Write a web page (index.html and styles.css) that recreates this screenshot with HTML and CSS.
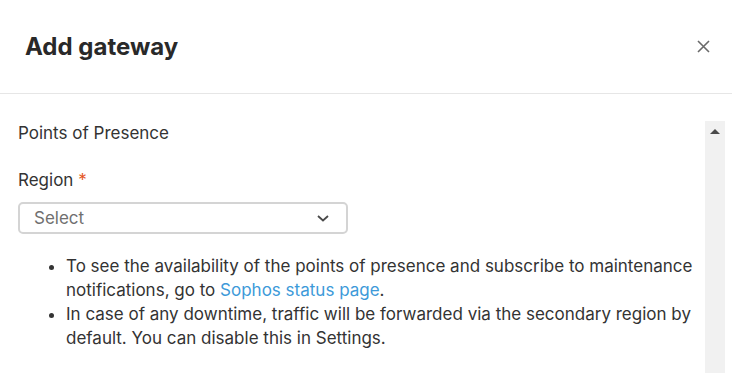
FILE: index.html
```html
<!DOCTYPE html>
<html lang="en">
<head>
    <meta charset="UTF-8">
    <meta name="viewport" content="width=device-width, initial-scale=1.0">
    <title>Add gateway</title>
    <link rel="stylesheet" href="styles.css">
</head>
<body>
    <!-- Dialog header -->
    <header class="dialog-header">
        <h1 class="dialog-title">Add gateway</h1>
        <button class="close-btn" aria-label="Close">
            <svg width="13" height="13" viewBox="0 0 13 13">
                <path d="M1 1L12 12M12 1L1 12" stroke="#6a6a6a" stroke-width="1.6" fill="none"/>
            </svg>
        </button>
    </header>

    <!-- Dialog body -->
    <div class="dialog-body">
        <div class="scroll-content">
            <p class="section-title">Points of Presence</p>

            <label class="field-label">Region <span class="required">*</span></label>
            <div class="select-box">
                <span class="select-placeholder">Select</span>
                <svg width="12" height="7" viewBox="0 0 12 7">
                    <path d="M1 1L6 5.5L11 1" stroke="#4a4a4a" stroke-width="1.8" fill="none"/>
                </svg>
            </div>

            <ul class="info-list">
                <li>To see the availability of the points of presence and subscribe to maintenance notifications, go to <a href="#">Sophos status page</a>.</li>
                <li>In case of any downtime, traffic will be forwarded via the secondary region by default. You can disable this in Settings.</li>
            </ul>
        </div>
        <div class="scrollbar">
            <span class="scroll-arrow"></span>
        </div>
    </div>
</body>
</html>
```

FILE: styles.css
```css
/* Dialog layout */
body {
    font-family: Inter, "Noto Sans", sans-serif;
    background-color: #fff;
    color: #333;
    margin: 0;
    padding: 0;
    height: 100vh;
    display: flex;
    flex-direction: column;
    overflow: hidden;
}
.dialog-header {
    height: 93px;
    border-bottom: 1px solid #e6e6e6;
    display: flex;
    align-items: center;
    justify-content: space-between;
    padding: 0 22px 0 25px;
    flex-shrink: 0;
}
.dialog-title {
    font-size: 24px;
    line-height: 28px;
    font-weight: 700;
    color: #292929;
    margin: 0;
}
.close-btn {
    background: none;
    border: none;
    padding: 0;
    width: 13px;
    height: 13px;
    display: flex;
    cursor: pointer;
}
.dialog-body {
    flex-grow: 1;
    display: flex;
    padding: 27px 7px 0 0;
    min-height: 0;
}
.scroll-content {
    flex-grow: 1;
    padding: 0 8px 0 18px;
}
.section-title {
    font-size: 17px;
    line-height: 24px;
    margin: 0 0 23px;
}
.field-label {
    display: block;
    font-size: 17px;
    line-height: 24px;
    margin-bottom: 10px;
}
.required {
    color: #e4561e;
}
.select-box {
    width: 330px;
    height: 32px;
    box-sizing: border-box;
    border: 2px solid #d4d4d4;
    border-radius: 5px;
    display: flex;
    align-items: center;
    justify-content: space-between;
    padding: 0 17px 0 14px;
}
.select-placeholder {
    font-size: 17px;
    color: #707070;
}
.info-list {
    margin: 20px 0 0;
    padding-left: 48px;
    font-size: 17px;
    line-height: 24px;
}
.info-list a {
    color: #3d9ad9;
    text-decoration: none;
}
.scrollbar {
    width: 20px;
    flex-shrink: 0;
    background-color: #f1f1f1;
    display: flex;
    justify-content: center;
    padding-top: 8px;
}
.scroll-arrow {
    width: 0;
    height: 0;
    border-left: 5px solid transparent;
    border-right: 5px solid transparent;
    border-bottom: 5px solid #4a4a4a;
}
```
